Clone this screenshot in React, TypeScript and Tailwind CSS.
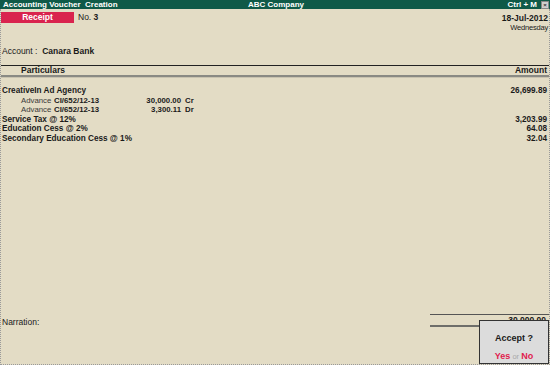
import React from "react";

type Row = {
  label: string;
  amount?: string;
  sub?: { ref: string; value: string; side: string }[];
};

const rows: Row[] = [
  {
    label: "CreativeIn Ad Agency",
    amount: "26,699.89",
    sub: [
      { ref: "CI/652/12-13", value: "30,000.00", side: "Cr" },
      { ref: "CI/652/12-13", value: "3,300.11", side: "Dr" },
    ],
  },
  { label: "Service Tax @ 12%", amount: "3,203.99" },
  { label: "Education Cess @ 2%", amount: "64.08" },
  { label: "Secondary Education Cess @ 1%", amount: "32.04" },
];

const font = { fontFamily: '"Liberation Sans", Arial, sans-serif' };

export default function App() {
  return (
    <div
      className="relative w-[550px] h-[365px] overflow-hidden bg-[#e3dcc5] text-[#1a1a1a] flex flex-col"
      style={font}
    >
      {/* title bar */}
      <div className="h-[9px] bg-[#0f5a48] text-white font-bold text-[8px] leading-[9px] flex items-center pl-[3px] pr-[1px]">
        <span className="flex-1">Accounting Voucher&nbsp; Creation</span>
        <span className="flex-1 text-center">ABC Company</span>
        <span className="flex-1 flex justify-end items-center gap-[4px]">
          <span>Ctrl + M</span>
          <span className="w-[8px] h-[8px] bg-[#cfcfcf] border border-[#888] text-[#333] text-[6px] leading-[6px] flex items-center justify-center">
            ×
          </span>
        </span>
      </div>

      <div className="flex-1 flex flex-col border-l border-r border-b border-dotted border-[#9a9a9a]">
        {/* voucher header */}
        <div className="flex items-start mt-[3px]">
          <div className="w-[73px] h-[11px] bg-[#d9234e] text-white font-bold text-[8.5px] leading-[11px] text-center">
            Receipt
          </div>
          <div className="ml-[4px] text-[8.5px] leading-[11px]">
            No. <span className="font-bold">3</span>
          </div>
          <div className="ml-auto pr-[1px] text-right mt-[2px]">
            <div className="font-bold text-[8.5px] leading-[9px]">18-Jul-2012</div>
            <div className="text-[7.5px] leading-[9px] tracking-[-0.2px]">Wednesday</div>
          </div>
        </div>

        <div className="mt-[14px] text-[8.5px] leading-[10px] pl-[1px]">
          Account :&nbsp; <span className="font-bold">Canara Bank</span>
        </div>

        {/* column header */}
        <div className="mt-[9px] border-t border-[#222]" />
        <div className="flex items-center h-[9px] text-[8.5px] font-bold leading-[9px]">
          <span className="pl-[20px] flex-1">Particulars</span>
          <span className="pr-[2px]">Amount</span>
        </div>
        <div className="h-[3px] border-t-2 border-b border-[#8a8a84] border-b-[#c9c3b0]" />

        {/* entries */}
        <div className="mt-[8px] flex flex-col text-[8.2px] leading-[9.5px]">
          {rows.map((r) => (
            <div key={r.label}>
              <div className="flex font-bold pl-[1px] pr-[2px]">
                <span className="flex-1">{r.label}</span>
                <span>{r.amount}</span>
              </div>
              {r.sub?.map((s, i) => (
                <div key={i} className="flex items-center text-[7.8px]">
                  <span className="pl-[20px] w-[53px] text-[#3a3a3a]">Advance</span>
                  <span className="font-bold w-[70px]">{s.ref}</span>
                  <span className="font-bold w-[57px] text-right">{s.value}</span>
                  <span className="font-bold ml-[4px]">{s.side}</span>
                </div>
              ))}
            </div>
          ))}
        </div>

        <div className="flex-1" />

        {/* footer */}
        <div className="flex items-end pb-[37px]">
          <span className="text-[8.5px] leading-[9px] pl-[1px] flex-1">Narration:</span>
          <div className="w-[119px] flex flex-col">
            <div className="border-t border-[#555]" />
            <div className="text-right font-bold text-[8.5px] leading-[9px] pr-[3px] mt-[1px]">30,000.00</div>
            <div className="h-[2px] bg-[#6e6e6a]" />
          </div>
        </div>
      </div>

      {/* accept dialog */}
      <div className="absolute right-[1px] bottom-[1px] w-[70px] h-[44px] bg-[#dcdcdc] border border-[#333] flex flex-col items-center">
        <div className="mt-[12px] font-bold text-[9px] leading-[10px]">Accept ?</div>
        <div className="mt-auto mb-[1px] text-[9px] leading-[10px]">
          <span className="font-bold text-[#e0214e]">Yes</span>
          <span className="text-[#a8a8a8] text-[7.5px]"> or </span>
          <span className="font-bold text-[#e0214e]">No</span>
        </div>
      </div>
    </div>
  );
}
